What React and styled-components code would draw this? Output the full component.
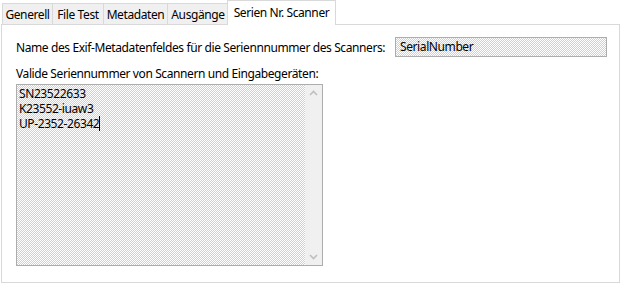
import React from 'react';
import styled, { createGlobalStyle } from 'styled-components';

const GlobalStyle = createGlobalStyle`
  html, body {
    margin: 0;
    padding: 0;
    background: #ffffff;
  }
  body {
    font-family: "Noto Sans", "Open Sans", sans-serif;
    font-size: 12px;
    letter-spacing: -0.4px;
    color: #000;
  }
`;

const dither = `
  background-color: #ffffff;
  background-image: conic-gradient(#fbc78c 25%, transparent 0 50%, #fbc78c 0 75%, transparent 0);
  background-size: 2px 2px;
`;

const Window = styled.div`
  width: 623px;
  height: 287px;
  box-sizing: border-box;
  padding: 0 3px 4px 1px;
  display: flex;
  flex-direction: column;
`;

const TabBar = styled.div`
  display: flex;
  align-items: flex-end;
  height: 25px;
  padding-left: 1px;
  position: relative;
  z-index: 1;
  margin-bottom: -1px;
`;

const Tab = styled.div`
  box-sizing: border-box;
  height: ${p => (p.$active ? '25px' : '22px')};
  width: ${p => p.$w}px;
  margin: ${p => (p.$active ? '0 -2px' : '0')};
  padding-top: ${p => (p.$active ? '3px' : '2px')};
  text-align: center;
  background: ${p => (p.$active ? '#ffffff' : '#f0f0f0')};
  border: 1px solid #d9d9d9;
  border-bottom: ${p => (p.$active ? 'none' : '1px solid #d9d9d9')};
  border-left: ${p => (p.$first || p.$active ? '1px solid #d9d9d9' : 'none')};
  position: relative;
  z-index: ${p => (p.$active ? 2 : 1)};
  white-space: nowrap;
`;

const Panel = styled.div`
  flex: 1;
  border: 1px solid #d9d9d9;
  background: #ffffff;
  padding: 12px 0 0 14px;
  display: flex;
  flex-direction: column;
`;

const FieldRow = styled.div`
  display: grid;
  grid-template-columns: 379px 212px;
  align-items: center;
  height: 20px;
`;

const Label = styled.div`
  white-space: nowrap;
  padding-top: 1px;
`;

const TextInput = styled.div`
  box-sizing: border-box;
  height: 20px;
  line-height: 17px;
  border: 1px solid #adadad;
  padding: 0 4px;
  ${dither}
`;

const ListLabel = styled(Label)`
  margin-top: 6px;
  height: 20px;
  line-height: 20px;
`;

const ListBox = styled.div`
  box-sizing: border-box;
  width: 307px;
  height: 182px;
  border: 1px solid #adadad;
  display: flex;
`;

const ListText = styled.div`
  flex: 1;
  padding: 1px 2px;
  line-height: 15px;
  ${dither}
`;

const Caret = styled.span`
  display: inline-block;
  width: 1px;
  height: 15px;
  background: #000;
  vertical-align: top;
`;

const ScrollBar = styled.div`
  width: 17px;
  background: #f0f0f0;
  display: flex;
  flex-direction: column;
  justify-content: space-between;
  align-items: center;
  padding: 5px 0;
`;

const Arrow = ({ down }) => (
  <svg width="9" height="6" viewBox="0 0 9 6">
    <path
      d={down ? 'M1 1 L4.5 4.5 L8 1' : 'M1 5 L4.5 1.5 L8 5'}
      fill="none"
      stroke="#bfbfbf"
      strokeWidth="1.6"
    />
  </svg>
);

const tabs = [
  { label: 'Generell', w: 51 },
  { label: 'File Test', w: 51 },
  { label: 'Metadaten', w: 64 },
  { label: 'Ausgänge', w: 61 },
  { label: 'Serien Nr. Scanner', w: 109, active: true },
];

const serials = ['SN23522633', 'K23552-iuaw3', 'UP-2352-26342'];

export default function App() {
  return (
    <>
      <GlobalStyle />
      <Window>
        <TabBar>
          {tabs.map((t, i) => (
            <Tab key={t.label} $w={t.w} $active={t.active} $first={i === 0}>
              {t.label}
            </Tab>
          ))}
        </TabBar>
        <Panel>
          <FieldRow>
            <Label>Name des Exif-Metadatenfeldes für die Seriennnummer des Scanners:</Label>
            <TextInput>SerialNumber</TextInput>
          </FieldRow>
          <ListLabel>Valide Seriennummer von Scannern und Eingabegeräten:</ListLabel>
          <ListBox>
            <ListText>
              {serials.map((s, i) => (
                <div key={s}>
                  {s}
                  {i === serials.length - 1 && <Caret />}
                </div>
              ))}
            </ListText>
            <ScrollBar>
              <Arrow />
              <Arrow down />
            </ScrollBar>
          </ListBox>
        </Panel>
      </Window>
    </>
  );
}
